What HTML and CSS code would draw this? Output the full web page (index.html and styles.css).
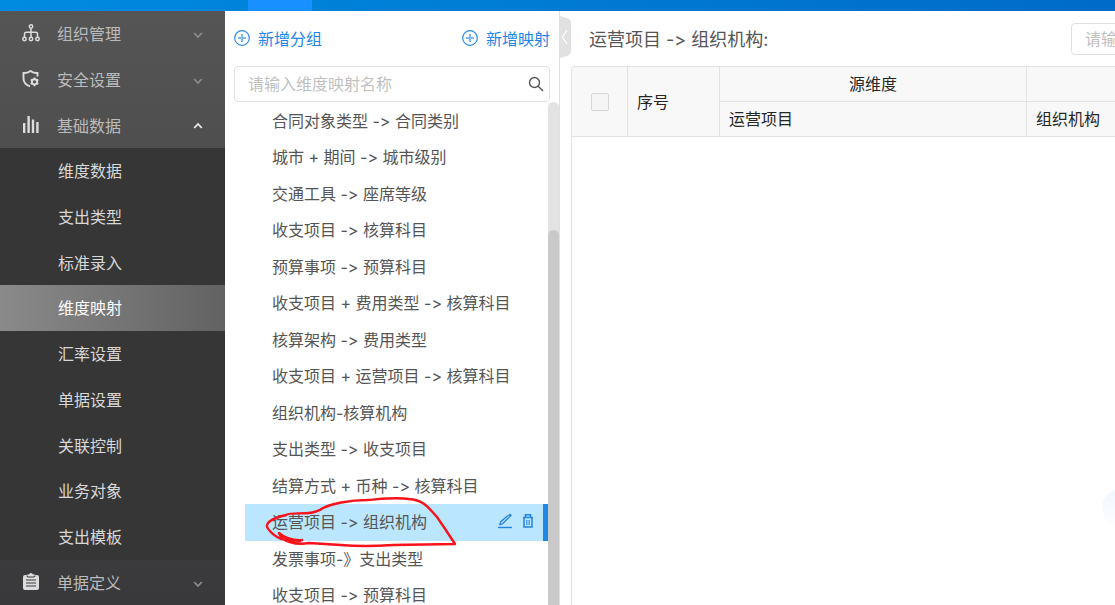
FILE: index.html
```
<!DOCTYPE html>
<html lang="zh-CN">
<head>
  <meta charset="UTF-8" />
  <title>维度映射</title>
  <link rel="stylesheet" href="styles.css">
</head>
<body>

  <header class="topbar">
    <div class="topbar-tab"></div>
  </header>

  <div class="layout">
    <nav class="sidebar">
      <button type="button" class="menu-item">
        <svg class="menu-icon" viewBox="0 0 18 18" fill="none" stroke="currentColor" stroke-width="1.5">
          <circle cx="9" cy="2.5" r="1.7"/>
          <circle cx="2.5" cy="15" r="1.7"/>
          <circle cx="9" cy="15" r="1.7"/>
          <circle cx="15.5" cy="15" r="1.7"/>
          <path d="M9 4.3V13.2M2.5 13.2V10Q2.5 8.2 4.3 8.2H13.7Q15.5 8.2 15.5 10V13.2"/>
        </svg>
        <span>组织管理</span>
        <svg class="arrow" viewBox="0 0 10 10"><path d="M1.2 3L5 7L8.8 3"/></svg>
      </button>
      <button type="button" class="menu-item">
        <svg class="menu-icon" viewBox="0 0 18 18" fill="none" stroke="currentColor" stroke-width="1.9">
          <path d="M15.5 6.5V3Q11.5 3.2 8.500 1Q5.500 3.200 1.500 3V8.500Q1.500 14 8 16.300"/>
          <circle cx="12.500" cy="11.800" r="2.600"/>
          <path d="M12.500 7.500V9M12.500 14.600V16.200M8.700 9.700L10 10.400M15 13.200L16.300 13.900M8.700 13.900L10 13.200M15 10.400L16.300 9.700"/>
        </svg>
        <span>安全设置</span>
        <svg class="arrow" viewBox="0 0 10 10"><path d="M1.2 3L5 7L8.8 3"/></svg>
      </button>
      <button type="button" class="menu-item open">
        <svg class="menu-icon" viewBox="0 0 18 18" fill="currentColor">
          <rect x="1" y="7" width="2.400" height="10"/>
          <rect x="5.400" y="0" width="2.400" height="17"/>
          <rect x="9.800" y="3.500" width="2.400" height="13.500"/>
          <rect x="14.200" y="6" width="2.400" height="11"/>
        </svg>
        <span>基础数据</span>
        <svg class="arrow" viewBox="0 0 10 10"><path d="M1.2 7L5 3L8.8 7"/></svg>
      </button>
      <div class="submenu">
        <a href="#">维度数据</a>
        <a href="#">支出类型</a>
        <a href="#">标准录入</a>
        <a href="#" class="active">维度映射</a>
        <a href="#">汇率设置</a>
        <a href="#">单据设置</a>
        <a href="#">关联控制</a>
        <a href="#">业务对象</a>
        <a href="#">支出模板</a>
      </div>
      <button type="button" class="menu-item">
        <svg class="menu-icon" viewBox="0 0 18 18">
          <path fill="currentColor" d="M3 2H5V1.500H7Q7.300 0 9 0Q10.700 0 11 1.500H13V2H15Q17 2 17 4V15Q17 17 15 17H3Q1 17 1 15V4Q1 2 3 2Z"/>
          <path stroke="#3d3d3f" stroke-width="1.200" fill="none" d="M5 2.500Q5 4 6.500 4H11.500Q13 4 13 2.500M4 7H14M4 10H14M4 13H14"/>
        </svg>
        <span>单据定义</span>
        <svg class="arrow" viewBox="0 0 10 10"><path d="M1.2 3L5 7L8.8 3"/></svg>
      </button>
    </nav>

    <section class="mapping">
      <div class="mapping-actions">
        <button type="button" class="add-btn">
          <svg viewBox="0 0 16 16"><circle cx="8" cy="8" r="7.300"/><path d="M8 4V12M4 8H12"/></svg>
          新增分组
        </button>
        <button type="button" class="add-btn">
          <svg viewBox="0 0 16 16"><circle cx="8" cy="8" r="7.300"/><path d="M8 4V12M4 8H12"/></svg>
          新增映射
        </button>
      </div>
      <div class="search-box">
        <input type="text" placeholder="请输入维度映射名称" aria-label="维度映射名称">
        <svg viewBox="0 0 16 16"><circle cx="6.500" cy="6.500" r="5"/><path d="M10.200 10.200L15 15"/></svg>
      </div>
      <div class="mapping-body">
        <ul class="mapping-list">
          <li>合同对象类型 -&gt; 合同类别</li>
          <li>城市 + 期间 -&gt; 城市级别</li>
          <li>交通工具 -&gt; 座席等级</li>
          <li>收支项目 -&gt; 核算科目</li>
          <li>预算事项 -&gt; 预算科目</li>
          <li>收支项目 + 费用类型 -&gt; 核算科目</li>
          <li>核算架构 -&gt; 费用类型</li>
          <li>收支项目 + 运营项目 -&gt; 核算科目</li>
          <li>组织机构-核算机构</li>
          <li>支出类型 -&gt; 收支项目</li>
          <li>结算方式 + 币种 -&gt; 核算科目</li>
          <li class="selected">
            <span>运营项目 -&gt; 组织机构</span>
            <button type="button" class="icon-btn" aria-label="编辑">
              <svg viewBox="0 0 16 16"><path d="M1 14.500H15" stroke-width="1.400"/><path d="M2.500 12L4 8.500L11 2.500M2.500 12L5.500 10.800L12.500 4" stroke-width="1.300"/><path d="M12 3.300L14 1.400" stroke-width="2.800"/></svg>
            </button>
            <button type="button" class="icon-btn" aria-label="删除">
              <svg viewBox="0 0 16 16"><path d="M3 4.500H13M5.500 4V1.800H10.500V4" stroke-width="1.600"/><path d="M4 5V14H12V5" stroke-width="1.500"/><path d="M6.800 7V12M9.200 7V12" stroke-width="1.100"/></svg>
            </button>
            <svg class="pen-mark" viewBox="0 0 200 54">
              <path d="M40 45Q25 46 16 38Q18 45 27 47Q36 50 46 48L78 50Q100 52 130 50L192 49Q183 35 174 22C165 12 160 5 146 4C133 2 118 4 104 5C86 5 68 9 60 13C48 22 30 16 23 20C7 24 0 29 6 35Q11 41 18 44L38 46"/>
            </svg>
          </li>
          <li>发票事项-》支出类型</li>
          <li>收支项目 -&gt; 预算科目</li>
        </ul>
        <div class="scroll-track"><div class="scroll-thumb"></div></div>
      </div>
    </section>

    <main class="content">
      <button type="button" class="collapse" aria-label="收起">
        <svg viewBox="0 0 11 42"><path class="tab-shape" d="M0 0L7 2Q11 3 11 8V34Q11 39 7 40L0 42Z"/><path class="tab-arrow" d="M7 14L2.500 21L7 28"/></svg>
      </button>
      <div class="content-head">
        <h1>运营项目 -&gt; 组织机构:</h1>
        <input type="text" placeholder="请输入" aria-label="搜索">
      </div>
      <div class="table-wrap">
        <table>
          <thead>
            <tr>
              <th rowspan="2" class="col-check"><input type="checkbox" aria-label="全选"></th>
              <th rowspan="2" class="col-index">序号</th>
              <th class="col-source group">源维度</th>
              <th></th>
            </tr>
            <tr>
              <th>运营项目</th>
              <th>组织机构</th>
            </tr>
          </thead>
        </table>
      </div>
      <div class="float-ball"></div>
    </main>
  </div>

</body>
</html>
```
FILE: styles.css
```
* {
  box-sizing: border-box;
}

body {
  margin: 0;
  height: 100vh;
  display: flex;
  flex-direction: column;
  overflow: hidden;
  font-family: Inter, "Noto Sans CJK SC", sans-serif;
  /* keep "->" as two characters */
  font-feature-settings: "calt" 0;
  font-size: 16px;
  color: #555;
  background: #fff;
}

button, input {
  font: inherit;
}

button {
  padding: 0;
  border: none;
  background: none;
  cursor: pointer;
}

input::placeholder {
  color: #bfbfbf;
  opacity: 1;
}

.topbar {
  flex: none;
  height: 11px;
  padding-left: 248px;
  background: linear-gradient(90deg, #008be0, #006bc8);
}

.topbar-tab {
  width: 64px;
  height: 100%;
  background: #1890ff;
}

.layout {
  flex: 1;
  display: flex;
  min-height: 0;
}

/* sidebar */
.sidebar {
  flex: none;
  width: 225px;
  overflow: hidden;
  background: linear-gradient(#555, #39393b);
}

.menu-item {
  display: flex;
  align-items: center;
  width: 100%;
  height: 46px;
  padding: 0 22px 2px;
  color: #bbb;
  text-align: left;
}

.menu-item.open {
  height: 45px;
}

.menu-item span {
  flex: 1;
}

.menu-icon {
  width: 18px;
  height: 18px;
  margin-right: 17px;
  color: #ddd;
}

.arrow {
  width: 10px;
  height: 10px;
  margin-top: 4px;
  fill: none;
  stroke: #8c8c8c;
  stroke-width: 1.8;
}

.open .arrow {
  margin-top: 2px;
  stroke: #eee;
}

.submenu {
  background: #363636;
}

.submenu a {
  display: flex;
  align-items: center;
  height: 46px;
  padding: 0 0 2px 58px;
  color: #d8d8d8;
  text-decoration: none;
}

.submenu a:nth-child(4n+3) {
  height: 45px;
}

.submenu .active {
  color: #fff;
  background: linear-gradient(90deg, #8a8a8a, #626262);
}

/* mapping list */
.mapping {
  flex: none;
  display: flex;
  flex-direction: column;
  width: 335px;
  border-right: 1px solid #e0e0e0;
}

.mapping-actions {
  flex: none;
  display: flex;
  justify-content: space-between;
  height: 55px;
  padding: 0 9px 2px;
}

.add-btn {
  display: flex;
  align-items: center;
  gap: 8px;
  color: #1f86e8;
}

.add-btn svg {
  width: 16px;
  height: 16px;
  fill: none;
  stroke: #2b8ce8;
  stroke-width: 1.2;
}

.add-btn path {
  stroke: #7cb9f2;
  stroke-width: 2;
}

.search-box {
  flex: none;
  display: flex;
  align-items: center;
  height: 36px;
  margin: 0 9px;
  padding: 0 5px 0 13px;
  border: 1px solid #e2e2e2;
  border-radius: 4px;
}

.search-box input {
  flex: 1;
  min-width: 0;
  padding: 0;
  border: none;
  outline: none;
}

.search-box svg {
  width: 16px;
  height: 16px;
  fill: none;
  stroke: #555;
  stroke-width: 1.4;
}

.mapping-body {
  flex: 1;
  display: flex;
  min-height: 0;
  overflow: hidden;
}

.mapping-list {
  flex: 1;
  margin: 0;
  padding: 1px 0 0 20px;
  list-style: none;
}

.mapping-list li {
  position: relative;
  display: flex;
  align-items: center;
  height: 37px;
  padding: 0 0 3px 27px;
  white-space: nowrap;
}

.mapping-list li:nth-child(odd) {
  height: 36px;
}

.mapping-list .selected {
  padding-right: 7px;
  border-right: 5px solid #1f88e5;
  background: #bae7ff;
}

.selected span {
  flex: 1;
}

.icon-btn {
  display: flex;
  margin-left: 7px;
}

.icon-btn svg {
  width: 16px;
  height: 16px;
  fill: none;
  stroke: #2483e0;
}

.pen-mark {
  position: absolute;
  left: 18px;
  top: -9px;
  z-index: 1;
  width: 200px;
  height: 54px;
  fill: none;
  stroke: #f8121a;
  stroke-width: 2.4;
  stroke-linejoin: round;
  pointer-events: none;
}

.scroll-track {
  width: 11px;
  padding-top: 128px;
  border-radius: 6px 6px 0 0;
  background: #e3e3e3;
}

.scroll-thumb {
  height: 100%;
  border-radius: 6px 6px 0 0;
  background: #c9c9c9;
}

/* content */
.content {
  position: relative;
  flex: 1;
  display: flex;
  flex-direction: column;
  min-width: 0;
  padding-left: 11px;
  overflow: hidden;
}

.collapse {
  position: absolute;
  left: 0;
  top: 5px;
  width: 11px;
  height: 42px;
}

.collapse svg {
  display: block;
  width: 11px;
  height: 42px;
}

.tab-shape {
  fill: #e1e1e1;
}

.tab-arrow {
  fill: none;
  stroke: #fff;
  stroke-width: 1.2;
}

.content-head {
  flex: none;
  display: flex;
  align-items: center;
  justify-content: space-between;
  min-width: 740px;
  height: 55px;
  padding-left: 18px;
}

.content-head h1 {
  margin: 0;
  padding-bottom: 2px;
  font-size: 18px;
  font-weight: normal;
}

.content-head input {
  width: 240px;
  height: 32px;
  padding: 0 13px;
  border: 1px solid #e0e0e0;
  border-radius: 4px;
}

.table-wrap {
  flex: 1;
  min-width: 740px;
  border: 1px solid #e2e2e2;
  border-bottom: none;
  border-radius: 4px 0 0 0;
  overflow: hidden;
}

table {
  width: 100%;
  table-layout: fixed;
  border-collapse: separate;
  border-spacing: 0;
}

th {
  height: 35px;
  padding: 0 9px;
  border-right: 1px solid #e2e2e2;
  border-bottom: 1px solid #e2e2e2;
  background: #f8f8f8;
  color: #262626;
  font-weight: normal;
  line-height: 24px;
  text-align: left;
}

.col-check {
  width: 56px;
  text-align: center;
}

.col-index {
  width: 92px;
}

.col-source {
  width: 307px;
}

.group {
  text-align: center;
}

.col-check input {
  display: block;
  width: 18px;
  height: 18px;
  margin: 0 auto;
  appearance: none;
  border: 1px solid #d6d6d6;
  border-radius: 2px;
  background: #f5f5f5;
}

.float-ball {
  position: absolute;
  right: -25px;
  top: 478px;
  width: 38px;
  height: 38px;
  border-radius: 50%;
  background: linear-gradient(#f2f7ff, #fcfdff);
}
```
